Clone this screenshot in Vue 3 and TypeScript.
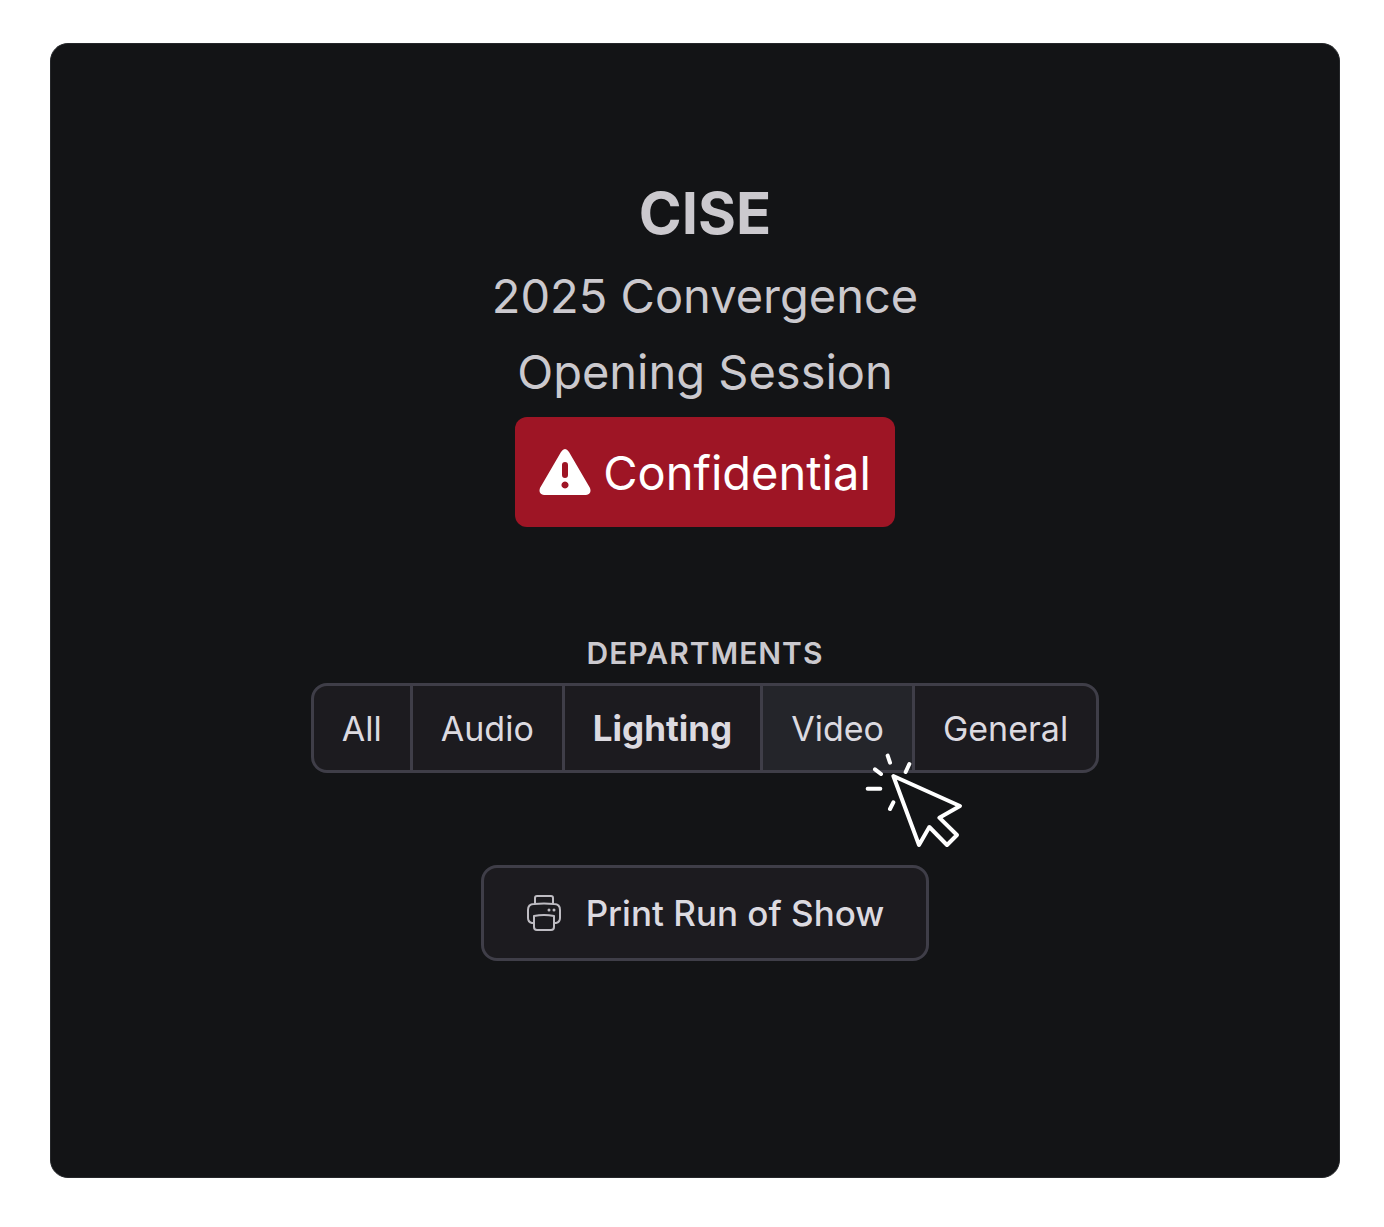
<script setup lang="ts">
import { ref } from 'vue'

interface Department {
  id: string
  label: string
}

const departments: Department[] = [
  { id: 'all', label: 'All' },
  { id: 'audio', label: 'Audio' },
  { id: 'lighting', label: 'Lighting' },
  { id: 'video', label: 'Video' },
  { id: 'general', label: 'General' },
]

const selected = ref('lighting')
const pointed = ref('video')
</script>

<template>
  <main class="page">
    <section class="card">
      <header class="heading">
        <h1 class="client">CISE</h1>
        <p class="line">2025 Convergence</p>
        <p class="line">Opening Session</p>
        <div class="badge">
          <svg class="warning" viewBox="0 0 52 46" aria-hidden="true">
            <path
              fill="#fff"
              fill-rule="evenodd"
              d="M22 3Q26-3 30 3L51 39Q53 45 47 46H5Q-1 45 1 39ZM26 13Q23 13 23 16V26Q23 29 26 29T29 26V16Q29 13 26 13ZM26 32.500a3.500 3.500 0 1 0 .01 0Z"
            />
          </svg>
          <span>Confidential</span>
        </div>
      </header>

      <div class="departments">
        <h2 id="departments-title" class="label">DEPARTMENTS</h2>
        <div class="group" role="group" aria-labelledby="departments-title">
          <button
            v-for="d in departments"
            :key="d.id"
            type="button"
            class="option"
            :class="{ selected: d.id === selected, pointed: d.id === pointed }"
            :aria-pressed="d.id === selected"
            @click="selected = d.id"
          >
            {{ d.label }}
            <svg v-if="d.id === pointed" class="cursor" viewBox="42 36 300 288" aria-hidden="true">
              <g fill="none" stroke="#fff" stroke-width="12" stroke-linecap="round" stroke-linejoin="round">
                <path d="M130 108L330 198L268 233L321 285L291 315L238 261L207 315Z" />
                <path d="M113 47L120 68M75 88L93 102M178 72L167 96M53 146H91M130 187L120 207" />
              </g>
            </svg>
          </button>
        </div>
      </div>

      <button type="button" class="print">
        <svg class="printer" viewBox="0 0 36 38" aria-hidden="true">
          <g fill="none" stroke="#bebcc2" stroke-width="2" stroke-linejoin="round">
            <path d="M9 10V4Q9 2 11 2H25Q27 2 27 4V10" />
            <path d="M8 29H6Q2 28 2 24V16Q2 10 8 10Q18 9 28 10Q34 10 34 16V24Q34 28 30 29H28" />
            <path d="M8 22Q18 20 28 22V33Q28 36 25 36H11Q8 36 8 33Z" />
          </g>
          <circle cx="23" cy="16" r="1.500" fill="#bebcc2" />
          <circle cx="28" cy="16" r="1.500" fill="#bebcc2" />
        </svg>
        <span>Print Run of Show</span>
      </button>
    </section>
  </main>
</template>

<style>
body {
  margin: 0;
  background: #fff;
}
</style>

<style scoped>
.page {
  box-sizing: border-box;
  min-height: 100vh;
  padding: 43px 44px 49px 50px;
  display: flex;
  font-family: Inter, Roboto, sans-serif;
}

.card {
  box-sizing: border-box;
  flex: 1;
  padding: 132px 0 212px 20px;
  display: flex;
  flex-direction: column;
  align-items: center;
  background: #131416;
  border: 1px solid #25272a;
  border-radius: 18px;
  color: #cbc9ce;
}

.heading {
  display: flex;
  flex-direction: column;
  align-items: center;
}

.client {
  margin: 0 0 8px;
  font-size: 58px;
  line-height: 74px;
  font-weight: 700;
}

.line {
  margin: 0;
  font-size: 47px;
  line-height: 76px;
}

.badge {
  box-sizing: border-box;
  height: 110px;
  margin-top: 7px;
  padding: 0 24px;
  display: flex;
  align-items: center;
  gap: 12px;
  border-radius: 12px;
  background: #9e1525;
  color: #fff;
  font-size: 47px;
}

.warning {
  width: 52px;
  height: 46px;
}

.departments {
  margin-top: 108px;
  display: flex;
  flex-direction: column;
  align-items: center;
}

.label {
  margin: 0;
  font-size: 30px;
  line-height: 36px;
  font-weight: 600;
  letter-spacing: 1px;
}

.group {
  margin-top: 12px;
  display: flex;
}

.option,
.print {
  box-sizing: border-box;
  border: 3px solid #3f3e48;
  background: #1c1b1f;
  color: #dcdae0;
  font-family: inherit;
  font-size: 34px;
}

.option {
  position: relative;
  height: 90px;
  margin-left: -3px;
  padding: 0 28px;
}

.option:first-child {
  margin-left: 0;
  border-radius: 16px 0 0 16px;
}

.option:last-child {
  border-radius: 0 16px 16px 0;
}

.selected {
  font-size: 35px;
  font-weight: 700;
}

.pointed {
  z-index: 1;
  background: #24252a;
}

.cursor {
  position: absolute;
  top: 66px;
  right: -52px;
  width: 100px;
  height: 96px;
  pointer-events: none;
}

.print {
  height: 96px;
  margin-top: 92px;
  padding: 0 42px;
  display: flex;
  align-items: center;
  gap: 24px;
  border-radius: 16px;
  font-size: 35px;
  font-weight: 500;
}

.printer {
  width: 36px;
  height: 38px;
}
</style>
